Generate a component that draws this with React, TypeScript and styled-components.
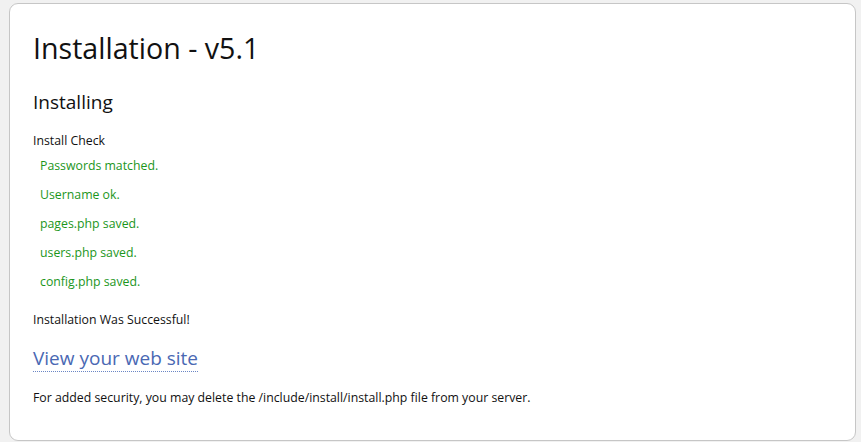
import React from 'react'
import styled, { createGlobalStyle } from 'styled-components'

const GlobalStyle = createGlobalStyle`
    html, body {
        margin: 0;
        padding: 0;
        background: #f1f1f1;
        font-family: "Open Sans", "Noto Sans", Arial, sans-serif;
        color: #111;
    }
`

const Page = styled.div`
    padding: 3px 5px 0 9px;
`

const Panel = styled.div`
    background: #fff;
    border: 1px solid #c6c6c6;
    border-radius: 9px;
    height: 438px;
    box-sizing: border-box;
    padding: 24px 23px 0 23px;
`

const Title = styled.h1`
    margin: 0;
    font-size: 28.6px;
    font-weight: 400;
    line-height: 40px;
`

const SubTitle = styled.h2`
    margin: 20px 0 0 0;
    font-size: 19px;
    font-weight: 400;
    line-height: 28px;
`

const Text = styled.p<{ $gap: number }>`
    margin: ${p => p.$gap}px 0 0 0;
    font-size: 12.3px;
    line-height: 18px;
`

const CheckList = styled.ul`
    list-style: none;
    margin: 7px 0 0 0;
    padding: 0 0 0 7px;
    display: flex;
    flex-direction: column;
    gap: 11px;
`

const CheckItem = styled.li`
    font-size: 12.3px;
    line-height: 18px;
    color: #1c961c;
`

const SiteLink = styled.a`
    display: inline-block;
    margin-top: 16px;
    font-size: 19px;
    line-height: 26px;
    color: #4a68b3;
    text-decoration: none;
    border-bottom: 1px dotted #6b86c4;
`

const checks = [
    'Passwords matched.',
    'Username ok.',
    'pages.php saved.',
    'users.php saved.',
    'config.php saved.'
]

export default function App() {
    return (
        <Page>
            <GlobalStyle />
            <Panel>
                <Title>Installation - v5.1</Title>
                <SubTitle>Installing</SubTitle>
                <Text $gap={16}>Install Check</Text>
                <CheckList>
                    {checks.map(c => <CheckItem key={c}>{c}</CheckItem>)}
                </CheckList>
                <Text $gap={20}>Installation Was Successful!</Text>
                <SiteLink href="#">View your web site</SiteLink>
                <Text $gap={17}>For added security, you may delete the /include/install/install.php file from your server.</Text>
            </Panel>
        </Page>
    )
}
